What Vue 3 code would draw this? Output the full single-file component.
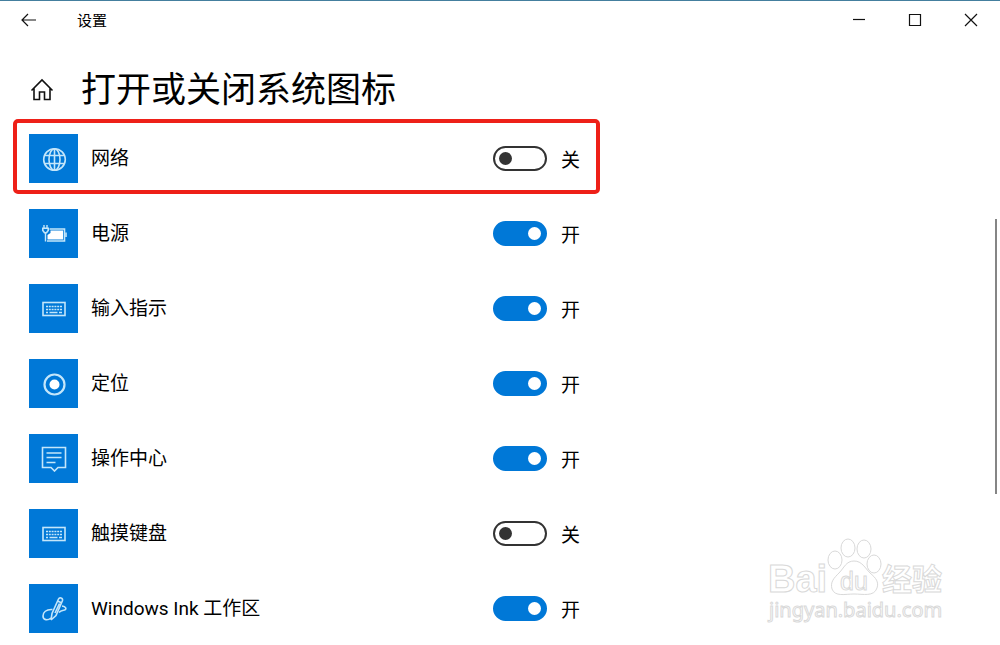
<script setup>
import { reactive } from 'vue'

const items = reactive([
  { id: 'network', icon: 'globe', label: '网络', on: false, marked: true },
  { id: 'power', icon: 'power', label: '电源', on: true },
  { id: 'input', icon: 'keyboard', label: '输入指示', on: true },
  { id: 'location', icon: 'location', label: '定位', on: true },
  { id: 'action', icon: 'action', label: '操作中心', on: true },
  { id: 'touch', icon: 'keyboard', label: '触摸键盘', on: false },
  { id: 'ink', icon: 'ink', label: 'Windows Ink 工作区', on: true },
])
</script>

<template>
  <div class="window">
    <header class="titlebar">
      <button class="back" type="button" aria-label="返回">
        <svg width="16" height="14" viewBox="0 0 16 14"><path d="M7 1 1 7l6 6M1 7h14" /></svg>
      </button>
      <span class="app-name">设置</span>
      <div class="controls">
        <button type="button" aria-label="最小化">
          <svg width="14" height="14" viewBox="0 0 14 14"><path d="M1 6.500h12" /></svg>
        </button>
        <button type="button" aria-label="最大化">
          <svg width="14" height="14" viewBox="0 0 14 14"><path d="M1.500 1.500h11v11h-11z" /></svg>
        </button>
        <button type="button" aria-label="关闭">
          <svg width="14" height="14" viewBox="0 0 14 14"><path d="m1 1 12 12M13 1 1 13" /></svg>
        </button>
      </div>
    </header>

    <main>
      <div class="heading">
        <button class="home" type="button" aria-label="主页">
          <svg width="24" height="24" viewBox="0 0 24 24">
            <path d="M1.500 13.500 12 3l10.500 10.500M4 11.500V22.500h5.500v-7.500h5v7.500H20V11.500" />
          </svg>
        </button>
        <h1>打开或关闭系统图标</h1>
      </div>

      <ul class="list">
        <li v-for="item in items" :key="item.id" class="row" :class="{ marked: item.marked }">
          <span class="tile">
            <svg v-if="item.icon === 'globe'" width="26" height="26" viewBox="0 0 26 26">
              <circle cx="13.500" cy="13.500" r="10.800" />
              <ellipse cx="13.500" cy="13.500" rx="5.500" ry="10.800" />
              <path d="M13.500 3v21M4 9.500h19M4 17.500h19" />
            </svg>
            <svg v-else-if="item.icon === 'power'" width="26" height="26" viewBox="0 0 26 26">
              <path d="M8.500 8h15v12H6" />
              <path class="solid" d="M9.500 9.500H22v9H6.500V14l3-2z" />
              <path d="M25 11.500v4.500" />
              <path class="thin" d="M3 4v3M6 4v3M4.500 12v8.500" />
              <path d="M1.800 7.300h5.400v2.200l-1.700 2.200h-2l-1.700-2.200z" />
            </svg>
            <svg v-else-if="item.icon === 'keyboard'" width="26" height="26" viewBox="0 0 26 26">
              <rect x="2" y="6.500" width="22" height="13" />
              <path class="keys" d="M5 10.500h16M5 13.500h16" />
              <path class="thin" d="M5 16.500h2M8.500 16.500h8M18 16.500h3" />
            </svg>
            <svg v-else-if="item.icon === 'location'" width="26" height="26" viewBox="0 0 26 26">
              <circle class="thick" cx="13.500" cy="13.500" r="10" />
              <circle class="solid" cx="13.500" cy="13.500" r="5" />
            </svg>
            <svg v-else-if="item.icon === 'action'" width="26" height="26" viewBox="0 0 26 26">
              <path d="M1.500 1.500h23v20H17L13.500 25l-3.500-3.500H1.500z" />
              <path d="M5.500 7h15M5.500 11.500h15M5.500 16.500h9" />
            </svg>
            <svg v-else width="26" height="26" viewBox="0 0 26 26">
              <path d="m10 24 1-6.500L17.500 3c1-2 4.500-1 4 1.500L15 19.500 10 24M16.500 5l4.500 2M18.500 7.500 14 17" />
              <path d="M11.500 13.500C5 13 2 16.500 2 20c0 4.500 5 4.500 8 2M21 10c4 .5 5 3 2.500 4-2.500.5-4 .5-5.500 2.500" />
            </svg>
          </span>
          <label class="label" :for="item.id">{{ item.label }}</label>
          <input :id="item.id" v-model="item.on" class="switch" type="checkbox" role="switch" />
          <span class="state">{{ item.on ? '开' : '关' }}</span>
        </li>
      </ul>
    </main>

    <div class="scroll-thumb"></div>

    <svg class="watermark" width="184" height="90" viewBox="0 0 184 90">
      <g class="outline">
        <text class="brand" x="2" y="56">Bai</text>
        <ellipse cx="69" cy="24" rx="7" ry="9" />
        <ellipse cx="82" cy="12" rx="7" ry="9" />
        <ellipse cx="98" cy="13" rx="7" ry="9" />
        <ellipse cx="108" cy="28" rx="7" ry="9" />
        <path d="M88 25c8 0 11 7 16 12 6 5 9 9 7 15-3 9-14 6-23 6s-19 3-22-5c-2-7 2-11 7-16s7-12 15-12z" />
        <text class="du" x="74" y="54">du</text>
        <text class="cjk" x="116" y="54">经验</text>
        <text class="site" x="3" y="81">jingyan.baidu.com</text>
      </g>
    </svg>
  </div>
</template>

<style>
body {
  background: #fff;
}
</style>

<style scoped>
.window {
  position: relative;
  box-sizing: border-box;
  min-height: 100vh;
  border-top: 1px solid #447f9e;
  overflow: hidden;
  background: #fff;
  color: #000;
  font-family: "Noto Sans CJK SC", "Noto Sans", sans-serif;
}
button {
  display: flex;
  align-items: center;
  justify-content: center;
  padding: 0;
  border: 0;
  background: none;
}
svg {
  fill: none;
}
button svg {
  stroke: #111;
  stroke-width: 1.2;
}
.titlebar {
  display: flex;
  align-items: center;
  height: 38px;
  padding-right: 1px;
}
.back {
  width: 58px;
  height: 38px;
}
.app-name {
  margin-left: 19px;
  font-size: 15px;
  line-height: 20px;
}
.controls {
  display: flex;
  margin-left: auto;
}
.controls button {
  width: 56px;
  height: 38px;
}
.heading {
  display: flex;
  align-items: center;
  gap: 27px;
  height: 82px;
  padding: 18px 30px 0;
  box-sizing: border-box;
}
.home svg {
  stroke-width: 1.6;
}
h1 {
  margin: 0;
  font-family: "Noto Sans", "Noto Sans CJK SC", sans-serif;
  font-size: 35px;
  line-height: 48px;
  font-weight: 400;
}
.list {
  margin: 0;
  padding: 0 13px;
  list-style: none;
}
.row {
  position: relative;
  display: flex;
  align-items: center;
  max-width: 587px;
  height: 75px;
  padding-left: 16px;
  box-sizing: border-box;
}
.marked::after {
  content: "";
  position: absolute;
  inset: -2px 0 2px;
  border: 4px solid #ee2018;
  border-radius: 5px;
  pointer-events: none;
}
.tile {
  display: flex;
  align-items: center;
  justify-content: center;
  width: 49px;
  height: 49px;
  margin-right: 13px;
  background: #0078d7;
}
.tile svg {
  stroke: #c4e6fa;
  stroke-width: 1.6;
}
.tile .solid {
  fill: #fff;
  stroke: none;
}
.tile .thin {
  stroke-width: 1.4;
}
.tile .thick {
  stroke-width: 2.2;
}
.tile .keys {
  stroke-width: 1.6;
  stroke-dasharray: 2 0.8;
}
.label {
  flex: 1;
  font-family: Roboto, "Noto Sans CJK SC", sans-serif;
  font-size: 19px;
  line-height: 26px;
}
.switch {
  appearance: none;
  position: relative;
  width: 54px;
  height: 25px;
  margin: 0 14px 0 0;
  box-sizing: border-box;
  border: 2px solid #333;
  border-radius: 13px;
  background: #fff;
}
.switch::before {
  content: "";
  position: absolute;
  top: 4px;
  left: 4px;
  width: 13px;
  height: 13px;
  border-radius: 50%;
  background: #333;
}
.switch:checked {
  border-color: #0078d7;
  background: #0078d7;
}
.switch:checked::before {
  right: 4px;
  left: auto;
  background: #fff;
}
.state {
  width: 39px;
  font-size: 19px;
  line-height: 26px;
}
.scroll-thumb {
  position: absolute;
  top: 218px;
  right: 3px;
  width: 2px;
  height: 275px;
  background: #858585;
}
.watermark {
  position: absolute;
  right: 50px;
  bottom: 20px;
}
.outline {
  fill: #fff;
  stroke: #d9d9d9;
  stroke-width: 1;
}
.brand {
  font: 700 38px "Liberation Sans", sans-serif;
}
.du {
  font: 400 25px "Liberation Sans", sans-serif;
}
.cjk {
  font: 700 30px "Noto Sans CJK SC", sans-serif;
}
.site {
  font: 400 20px "Noto Sans", sans-serif;
}
</style>
